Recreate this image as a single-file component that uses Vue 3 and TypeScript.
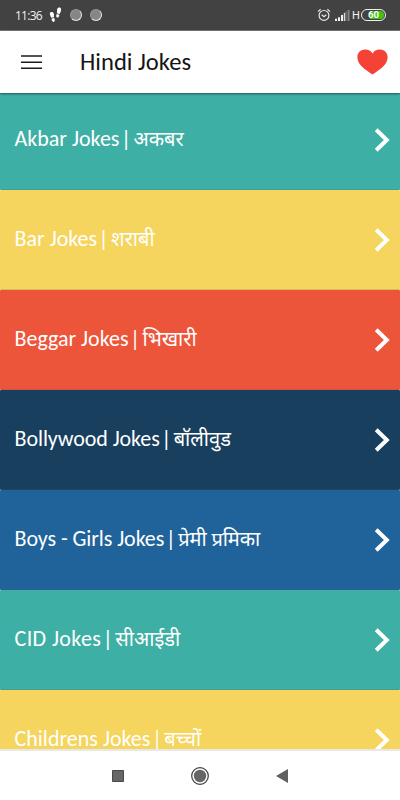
<script setup lang="ts">
interface Category {
  name: string
  hindi: string
  tone: string
  tracking?: string
}

const categories: Category[] = [
  { name: 'Akbar Jokes', hindi: 'अकबर', tone: 'teal' },
  { name: 'Bar Jokes', hindi: 'शराबी', tone: 'yellow' },
  { name: 'Beggar Jokes', hindi: 'भिखारी', tone: 'red' },
  { name: 'Bollywood Jokes', hindi: 'बॉलीवुड', tone: 'navy', tracking: 'snug' },
  { name: 'Boys - Girls Jokes', hindi: 'प्रेमी प्रमिका', tone: 'blue', tracking: 'snug' },
  { name: 'CID Jokes', hindi: 'सीआईडी', tone: 'teal', tracking: 'wide' },
  { name: 'Childrens Jokes', hindi: 'बच्चों', tone: 'yellow' },
]
</script>

<template>
  <div class="screen">
    <div class="status">
      <span class="clock">11:36</span>
      <svg class="steps" width="13" height="16" viewBox="0 0 13 16" fill="#fff">
        <path d="M1 5.8C1.5 4.6 4.4 4.4 4.9 7L5 10.3 2.3 10.8C1.5 9.2.5 7.6 1 5.8ZM2.6 11.6 5.2 11C6.2 13 5.9 14.9 4.6 14.9 3 14.9 2.6 13.4 2.6 11.6Z" />
        <path d="M8.1 2.5C8.7.1 11.5 0 12 1.8 12.5 3.8 11.4 5.5 10.6 7L7.9 6.2ZM7.7 7.1 10.3 7.8C10.3 9.7 9.5 10.8 8.2 10.6 6.9 10.3 6.9 8.7 7.7 7.1Z" />
      </svg>
      <i class="dot"></i>
      <i class="dot"></i>
      <span class="spring"></span>
      <svg class="alarm" width="14" height="14" viewBox="0 0 14 14" fill="none" stroke="#e8e8e8" stroke-width="1.2">
        <circle cx="7" cy="7.4" r="4.9" />
        <path d="M1 3.6 3.6 1.3M13 3.6 10.4 1.3M4.7 6.7 7 8.6l2.3-1.9" />
      </svg>
      <svg class="signal" width="15" height="11" viewBox="0 0 15 11">
        <path fill="#f2f2f2" d="M0 8.8h2V11H0zM3 7.2h2V11H3zM6 5h2v6H6z" />
        <path fill="#dcdcdc" d="M8.8 3h1.2v8H8.8z" />
        <path fill="#858585" d="M10.3 1.6h1.2V11h-1.2zM12.6 0h1.9v11h-1.9z" />
      </svg>
      <span class="network">H</span>
      <span class="battery"><span class="level">60</span></span>
    </div>

    <header class="bar">
      <svg class="menu" width="21" height="15" viewBox="0 0 21 15">
        <path d="M0 1h21M0 7.2h21M0 13.2h21" stroke="#1b1b1b" stroke-width="1.6" />
      </svg>
      <h1>Hindi Jokes</h1>
      <svg class="heart" width="31" height="26" viewBox="0 0 31 26">
        <path fill="#f44336" d="M15.5 25.4 C11.5 22.6 4.8 18.7 1.7 13.4 C-1.2 8.2.5.6 8 .4 C11.4.3 14 1.8 15.5 4.4 C17 1.8 19.6.3 23 .4 C30.5.6 32.2 8.2 29.3 13.4 C26.2 18.7 19.5 22.6 15.5 25.4Z" />
      </svg>
    </header>

    <main class="list">
      <div v-for="item in categories" :key="item.name" class="row" :class="[item.tone, item.tracking]">
        <span class="label"><span class="name">{{ item.name }}</span><span class="divider">|</span><span class="hindi">{{ item.hindi }}</span></span>
        <svg class="chevron" width="16" height="24" viewBox="0 0 16 24" fill="none">
          <path d="M2.2 1.8 12.8 12 2.2 22.2" stroke="#fff" stroke-width="4" />
        </svg>
      </div>
    </main>

    <nav class="nav">
      <svg width="12" height="12" viewBox="0 0 12 12">
        <path d="M.5.5h11v11H.5z" fill="#666" stroke="#484848" />
      </svg>
      <svg width="18" height="18" viewBox="0 0 18 18">
        <circle cx="9" cy="9" r="8.3" fill="none" stroke="#3c3c3c" stroke-width="1.2" />
        <circle cx="9" cy="9" r="6.2" fill="#666" />
      </svg>
      <svg width="12" height="14" viewBox="0 0 12 14">
        <path d="M0 7 12 0v14z" fill="#606060" />
      </svg>
    </nav>
  </div>
</template>

<style>
body {
  margin: 0;
}
</style>

<style scoped>
.screen {
  width: 400px;
  height: 800px;
  display: flex;
  flex-direction: column;
  overflow: hidden;
  background: #fff;
  font-family: Carlito, Lato, "Noto Sans", sans-serif;
}
.status {
  box-sizing: border-box;
  flex: none;
  display: flex;
  align-items: center;
  height: 31px;
  padding: 0 14px 0 15px;
  background: #424242;
  border-bottom: 1px solid #777;
  color: #f2f2f2;
}
.clock {
  width: 34px;
  padding-top: 1px;
  font: 12px/16px "Open Sans", sans-serif;
  letter-spacing: -0.75px;
  white-space: nowrap;
}
.steps {
  margin-right: 8px;
}
.dot {
  box-sizing: border-box;
  width: 12px;
  height: 12px;
  margin-right: 8px;
  border-radius: 50%;
  background: #868686;
  border: 1px solid #989898;
  border-right-color: #e4e4e4;
  border-bottom-color: #e4e4e4;
}
.spring {
  flex: 1;
}
.alarm {
  margin-right: 4px;
}
.signal {
  margin-right: 2px;
}
.network {
  width: 9px;
  padding-top: 1px;
  font: 11px/16px Roboto, sans-serif;
}
.battery {
  box-sizing: border-box;
  width: 25px;
  height: 12px;
  padding: 1px;
  border: 1px solid #f0f0f0;
  border-radius: 6px;
}
.level {
  display: block;
  height: 8px;
  border-radius: 4px;
  background: linear-gradient(90deg, #424242 0 35%, #42c40e 35%);
  color: #fff;
  font: bold 9.5px/8px Roboto, sans-serif;
  text-align: center;
}
.bar {
  position: relative;
  z-index: 1;
  box-sizing: border-box;
  flex: none;
  display: flex;
  align-items: center;
  height: 62px;
  padding: 0 12px 0 21px;
  background: #fff;
  box-shadow: 0 1px 2px rgba(0, 0, 0, 0.5);
}
h1 {
  flex: 1;
  margin: 0 0 0 38px;
  color: #151515;
  font-size: 24.6px;
  font-weight: 400;
  line-height: 30px;
}
.list {
  flex: 1;
  min-height: 0;
  margin-top: -3px;
  overflow: hidden;
}
.row {
  box-sizing: border-box;
  display: flex;
  align-items: center;
  justify-content: space-between;
  height: 100px;
  padding: 0 10px 0 14.5px;
  border-bottom: 1px solid rgba(90, 90, 90, 0.2);
  border-radius: 1px;
  color: #fff;
}
.label {
  padding-bottom: 2px;
  font-size: 22px;
  line-height: 28px;
  white-space: nowrap;
}
.divider {
  margin: 0 2.3px 0 1.5px;
}
.hindi {
  font-family: "Noto Sans", "Noto Sans Devanagari", sans-serif;
  font-size: 20px;
}
.snug .name {
  letter-spacing: -0.08px;
}
.wide .name {
  letter-spacing: 0.4px;
}
.teal {
  background-color: #3eafa5;
}
.yellow {
  background-color: #f5d55d;
}
.red {
  background-color: #ed553b;
}
.navy {
  background-color: #193f5f;
}
.blue {
  background-color: #20639b;
}
.blue .hindi {
  letter-spacing: -0.15px;
}
.nav {
  box-sizing: border-box;
  flex: none;
  display: flex;
  align-items: center;
  justify-content: center;
  gap: 67px;
  height: 51px;
  padding-right: 1px;
  border-top: 2px solid #e8e8e8;
  background: #fff;
}
</style>
